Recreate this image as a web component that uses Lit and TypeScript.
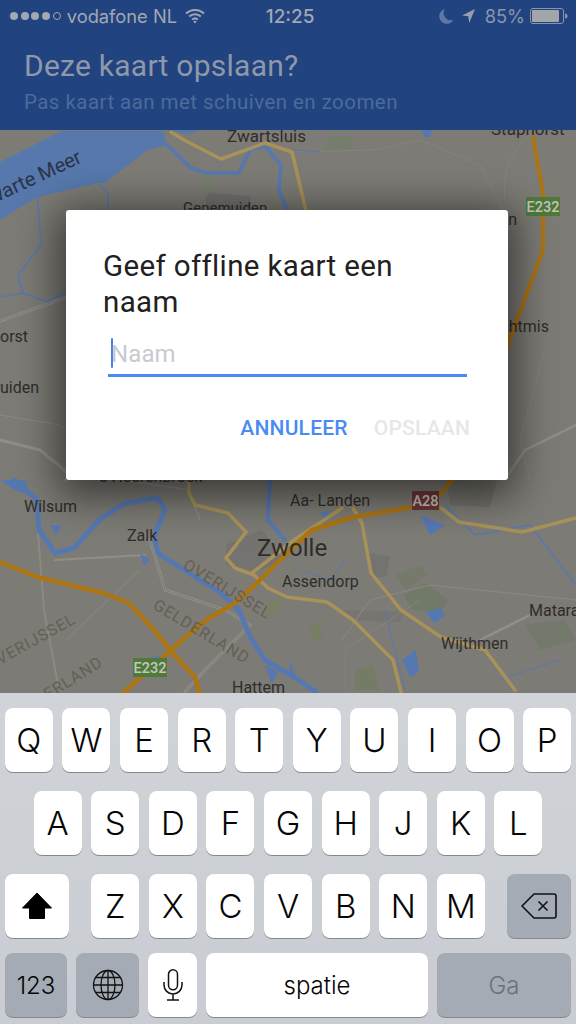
import { LitElement, html, css, svg } from "lit";
import { customElement } from "lit/decorators.js";

const ROW1 = "QWERTYUIOP".split("");
const ROW2 = "ASDFGHJKL".split("");
const ROW3 = "ZXCVBNM".split("");

const line = (d: string, c: string, w: number) =>
  svg`<path d=${d} fill="none" stroke=${c} stroke-width=${w} stroke-linejoin="round" stroke-linecap="round"/>`;

const label = (t: string, x: number, y: number, s = 17, a = "start") =>
  svg`<text x=${x} y=${y} font-size=${s} text-anchor=${a} fill="#2f2d2a" font-family="Roboto, sans-serif">${t}</text>`;

const region = (t: string, x: number, y: number, r: number) =>
  svg`<text transform="translate(${x} ${y}) rotate(${r})" font-size="16" letter-spacing="1" fill="#665f53" font-family="Roboto, sans-serif">${t}</text>`;

const shield = (t: string, x: number, y: number, w: number, h: number, c: string) => svg`
  <rect x=${x} y=${y} width=${w} height=${h} fill=${c}/>
  <text x=${x + w / 2} y=${y + h - 4.5} font-size="14.5" font-weight="500" text-anchor="middle" fill="#c4c6be" font-family="Roboto, sans-serif">${t}</text>`;

const YEL = "#a8925a";
const ORG = "#ad7412";
const BLU = "#5678b2";
const GRY = "#8b8982";
const DBL = "#908e87";

@customElement("app-map")
class AppMap extends LitElement {
  static styles = css`
    :host { display: block; position: relative; height: 563px; overflow: hidden; background: #7d7b75; }
    svg { position: absolute; inset: 0; display: block; }
  `;
  render() {
    return html`<svg width="576" height="563" viewBox="0 130 576 563" xmlns="http://www.w3.org/2000/svg">
      <path d="M0 130H576V693H0Z" fill="#7d7b75"/>
      <path d="M447 480H497L490 507L450 505Z" fill="#55534f" opacity=".25"/>
      <!-- urban grey -->
      <path d="M204 192L250 196L254 225L210 225Z" fill="#72716e"/>
      <path d="M226 545L262 530L284 560L250 575L226 565Z" fill="#74736f"/>
      <path d="M368 553L390 557L386 577L370 577Z" fill="#747370"/>
      <path d="M342 610L404 612L400 622L350 620Z" fill="#767572"/>
      <!-- greens -->
      <path d="M404 595L425 583L448 600L440 613L412 610Z" fill="#717a68"/>
      <path d="M268 605L280 597L278 613L266 616Z" fill="#78805f"/>
      <path d="M309 628L318 623L323 643L315 640Z" fill="#777f62"/>
      <path d="M395 575L420 565L428 575L405 590Z" fill="#757a6b"/>
      <path d="M525 625L565 620L576 640L540 650Z" fill="#737a6b"/>
      <path d="M355 670L372 665L380 690H355Z" fill="#757c66"/>
      <path d="M205 170L214 178L205 200Z" fill="#76806c"/>
      <path d="M328 138L350 135L352 148L325 152Z" fill="#757e6d"/>
      <!-- minor roads -->
      ${line("M0 321L67 297L90 287", DBL, 3)}
      ${line("M0 321L67 297L90 287", "#7d7b75", 1)}
      ${line("M0 415L60 425L90 450", GRY, 1)}
      ${line("M0 440L40 450L70 475L66 480", DBL, 3)}
      ${line("M120 480L190 490", GRY, 1.5)}
      ${line("M190 495L200 520", GRY, 1.5)}
      ${line("M37 520L44 610L58 685", GRY, 2)}
      ${line("M150 540L165 590L225 610L250 625L205 670L185 692", DBL, 3)}
      ${line("M150 540L165 590L225 610L250 625L205 670L185 692", "#7d7b75", 1)}
      ${line("M55 560L145 555", DBL, 2)}
      ${line("M342 640L370 600L430 585L576 600", GRY, 1)}
      ${line("M480 640L530 615", DBL, 2.5)}
      ${line("M290 152L375 150L420 140L480 165L505 215", "#85837c", 1)}
      ${line("M530 135Q500 160 505 200", "#85837c", 1)}
      ${line("M545 350L520 440L530 480", "#85837c", 1)}
      ${line("M508 475L525 450L576 425", DBL, 2.5)}
      ${line("M66 640L140 570", GRY, 1)}
      ${line("M345 690L345 650L420 600", "#85837c", 1)}
      <!-- water -->
      <path d="M0 162L62 131H163L167 145L147 150L105 183L99 183L37 197L0 220Z" fill="#5678ac"/>
      <path d="M168 130H200L186 134Z" fill="#5678ac"/>
      <path d="M422 130H432L430 137L424 137Z" fill="#5678ac"/>
      ${line("M37 193L41 245L18 275L23 293L47 302L66 292", BLU, 1.5)}
      ${line("M23 293L0 297", BLU, 1.5)}
      ${line("M100 185L108 193L108 210", BLU, 1.5)}
      ${line("M167 145L191 168L206 173L239 173L250 150L265 146L281 165L279 190L287 210", BLU, 3.5)}
      ${line("M290 150L320 152", BLU, 1)}
      ${line("M15 480L37 500L39 530L55 553L74 548L99 520L125 503L158 498L165 510L154 537L158 553L184 570L221 593L239 610L250 637L265 660L294 677L316 692", BLU, 5)}
      ${line("M270 480L268 520L285 540", BLU, 4)}
      <path d="M50 525L62 525L56 535Z M140 553L150 560L144 566Z M320 513L330 510L326 520Z M142 660L162 655L160 670L147 672Z M265 665L278 672L272 684Z M290 660L297 680L290 675Z M426 612L440 608L445 616L434 623Z M402 660L416 650L419 672L410 677Z" fill="#5678b2"/>
      ${line("M300 570L330 580L345 560", BLU, 1)}
      ${line("M385 610L405 690", BLU, 1)}
      ${line("M445 505L475 535L530 525L576 585", BLU, 1.5)}
      ${line("M500 680L560 660", BLU, 1)}
      <path d="M0 480L25 480L30 495L15 490Z" fill="#5678b2"/>
      <path d="M420 515L445 525L430 535Z" fill="#5678b2"/>
      <!-- yellow roads -->
      ${line("M171 132L184 140L221 159L265 143L292 152L307 215", YEL, 3.5)}
      ${line("M189 480V493L195 505L228 513L246 532L226 558L235 568L254 575L268 588L287 597L327 602L353 620L393 660L401 692", YEL, 3.5)}
      ${line("M252 573L294 540L342 508", YEL, 3.5)}
      ${line("M353 508L362 523L371 573L401 610L441 637L485 650L515 690", YEL, 3.5)}
      ${line("M441 508L459 522L522 532L576 518", YEL, 3.5)}
      <!-- motorways -->
      ${line("M533 137L543 193L543 250L513 330L505 355", ORG, 4)}
      ${line("M0 562L37 577L103 593L129 603L154 630L176 657L195 677L200 695", ORG, 4.5)}
      ${line("M121 695L173 648L206 620L235 603L257 583L283 557L312 530L349 518L412 507L441 493L452 480", ORG, 4.5)}
      <!-- labels -->
      ${label("Zwartsluis", 227, 142)}
      ${label("Staphorst", 491, 135, 17)}
      ${label("Genemuiden", 183, 213, 15)}
      ${label("Wilsum", 24, 512, 16)}
      ${label("Zalk", 127, 541, 16)}
      ${label("Aa- Landen", 290, 506, 16)}
      ${label("Zwolle", 257, 556, 24)}
      ${label("Assendorp", 282, 587, 16)}
      ${label("Matara", 529, 616, 16)}
      ${label("Wijthmen", 441, 649, 16)}
      ${label("Hattem", 232, 693, 16)}
      ${label("orst", 0, 342, 16)}
      ${label("uiden", 0, 393, 16)}
      ${label("Lichtmis", 549, 332, 16, "end")}
      ${label("Kamperveen", 517, 225, 16, "end")}
      ${label("'s Heerenbroek", 97, 482, 16)}
      <text transform="translate(83 162) rotate(-25)" text-anchor="end" font-size="20" fill="#2a3347" font-family="Roboto, sans-serif">Zwarte Meer</text>
      ${region("OVERIJSSEL", 182, 568, 31)}
      ${region("GELDERLAND", 152, 608, 31)}
      ${region("VERIJSSEL", 0, 665, -29)}
      ${region("ERLAND", 48, 700, -32)}
      ${shield("E232", 526, 197, 34, 19, "#4f7a3a")}
      ${shield("E232", 133, 658, 34, 19, "#4f7a3a")}
      ${shield("A28", 412, 491, 27, 19, "#703538")}
    </svg>`;
  }
}

@customElement("app-root")
class AppRoot extends LitElement {
  static styles = css`
    :host { display: block; position: relative; width: 576px; height: 1024px; overflow: hidden; font-family: Roboto, sans-serif; background: #cdd1d6; }

    .head { height: 130px; background: #21437f; box-sizing: border-box; display: flex; flex-direction: column; }
    .status { height: 32px; display: flex; align-items: center; padding: 0 8px 0 10px; font-family: Inter, sans-serif; font-size: 18.3px; color: #a2a8b2; }
    .dots { display: flex; gap: 2.7px; margin-right: 6px; }
    .dot { width: 8px; height: 8px; border-radius: 50%; background: #a2a8b2; box-sizing: border-box; }
    .dot.off { background: none; border: 1px solid #a2a8b2; }
    .carrier { width: 118px; white-space: nowrap; }
    .wifi { display: block; }
    .time { margin-left: 61px; font-weight: 500; width: 122px; font-size: 19px; }
    .right { margin-left: auto; display: flex; align-items: center; }
    .moon { margin-right: 8px; }
    .arrow { margin-right: 10px; }
    .pct { color: #8a95aa; margin-right: 5px; }
    .title { margin: 16px 0 0 24px; font-size: 30px; line-height: 36px; color: #8e98a9; letter-spacing: .25px; }
    .sub { margin: 4px 0 0 24px; font-size: 20.5px; line-height: 28px; color: #4c6b9c; letter-spacing: .45px; }

    .dialog { position: absolute; left: 66px; top: 210px; width: 442px; height: 270px; box-sizing: border-box; padding: 38px 38px 0 37px; background: #fff; border-radius: 3px; box-shadow: 0 8px 40px 8px rgba(0,0,0,.55); display: flex; flex-direction: column; }
    .dtitle { font-size: 29.5px; line-height: 36px; font-weight: 400; color: #212121; letter-spacing: .35px; margin: 0; }
    .field { margin: 4px 3px 0 4.5px; height: 43px; padding-top: 7px; border-bottom: 3px solid #4a8af4; display: flex; align-items: flex-start; }
    .caret { width: 2.5px; height: 30px; margin: 7px 0 0 3px; background: #4a7df0; border-radius: 1px; flex: none; }
    .ph { font-size: 24px; line-height: 36px; margin: 5px 0 0 -2px; color: #c8cad0; letter-spacing: .1px; }
    .actions { display: flex; justify-content: flex-end; gap: 26px; margin: 39px 0 0; font-size: 21px; line-height: 24px; font-weight: 500; letter-spacing: .2px; }
    .cancel { color: #4a8af4; }
    .save { color: #e6e7e9; }

    .kb { height: 331px; box-sizing: border-box; padding-top: 15px; background: linear-gradient(#d0d4d8, #c9cdd3); font-family: Inter, sans-serif; display: flex; flex-direction: column; }
    .row { display: flex; height: 64px; justify-content: center; gap: 9.6px; margin-bottom: 19px; }
    .row.r3 { justify-content: space-between; padding: 0 5px; margin-bottom: 15px; }
    .group { display: flex; gap: 9.6px; }
    .key { width: 48px; height: 64px; background: #fff; border-radius: 8px; box-shadow: 0 1px 0 #85888d; display: flex; align-items: center; justify-content: center; font-size: 33px; font-weight: 350; color: #050505; flex: none; }
    .dark { background: #a4abb5; }
    .wide { width: 64px; }
    .r4 { justify-content: flex-start; padding-left: 5px; gap: 9px; margin: 0; }
    .small { font-size: 24px; font-weight: 350; }
    .k123 { width: 62px; }
    .kglobe { width: 63px; }
    .kmic { width: 49px; }
    .kspace { width: 222px; }
    .kgo { width: 134px; color: #6d7176; }
  `;

  render() {
    return html`
      <div class="head">
        <div class="status">
          <div class="dots">
            <span class="dot"></span><span class="dot"></span><span class="dot"></span><span class="dot"></span><span class="dot off"></span>
          </div>
          <span class="carrier">vodafone NL</span>
          <svg class="wifi" width="20" height="16" viewBox="0 0 20 16">
            <path d="M1 5.5A13 13 0 0 1 19 5.5" fill="none" stroke="#a2a8b2" stroke-width="2"/>
            <path d="M4.2 8.6A8.5 8.5 0 0 1 15.8 8.6" fill="none" stroke="#a2a8b2" stroke-width="2"/>
            <path d="M7.2 11.6A4.2 4.2 0 0 1 12.8 11.6" fill="none" stroke="#a2a8b2" stroke-width="2"/>
            <path d="M8.3 13.4L10 15.4L11.7 13.4A2.6 2.6 0 0 0 8.3 13.4Z" fill="#a2a8b2"/>
          </svg>
          <span class="time">12:25</span>
          <div class="right">
            <svg class="moon" width="15" height="16" viewBox="0 0 15 16"><path d="M6 1A7.5 7.5 0 1 0 14.5 11.5A7 7 0 0 1 6 1Z" fill="#5d77a6"/></svg>
            <svg class="arrow" width="13" height="14" viewBox="0 0 13 14"><path d="M13 0L0 6.5L6.3 7.2L7.2 14Z" fill="#98a0ae"/></svg>
            <span class="pct">85%</span>
            <svg width="38" height="16" viewBox="0 0 38 16">
              <rect x=".5" y=".5" width="33" height="15" rx="2.5" fill="none" stroke="#8a95aa"/>
              <rect x="2" y="2" width="27" height="12" rx="1" fill="#a2a5aa"/>
              <path d="M35 5.5A2.5 2.5 0 0 1 35 10.5Z" fill="#8a95aa"/>
            </svg>
          </div>
        </div>
        <div class="title">Deze kaart opslaan?</div>
        <div class="sub">Pas kaart aan met schuiven en zoomen</div>
      </div>

      <app-map></app-map>

      <div class="kb">
        <div class="row">${ROW1.map((k) => html`<div class="key">${k}</div>`)}</div>
        <div class="row">${ROW2.map((k) => html`<div class="key">${k}</div>`)}</div>
        <div class="row r3">
          <div class="key wide">
            <svg width="30" height="26" viewBox="0 0 30 26"><path d="M15 0L29.5 15H22.5V25.5H7.5V15H.5Z" fill="#000" stroke="#000" stroke-linejoin="round"/></svg>
          </div>
          <div class="group">${ROW3.map((k) => html`<div class="key">${k}</div>`)}</div>
          <div class="key wide dark">
            <svg width="36" height="26" viewBox="0 0 36 26" fill="none" stroke="#111" stroke-width="1.6">
              <path d="M13 1H33A2 2 0 0 1 35 3V23A2 2 0 0 1 33 25H13L1 13Z" stroke-linejoin="round"/>
              <path d="M17.5 8.5L26.5 17.5M26.5 8.5L17.5 17.5"/>
            </svg>
          </div>
        </div>
        <div class="row r4">
          <div class="key dark small k123">123</div>
          <div class="key dark kglobe">
            <svg width="32" height="32" viewBox="0 0 32 32" fill="none" stroke="#111" stroke-width="1.3">
              <circle cx="16" cy="16" r="14.5"/>
              <ellipse cx="16" cy="16" rx="7" ry="14.5"/>
              <path d="M16 1.5V30.5M1.5 16H30.5M4 8.5H28M4 23.5H28"/>
            </svg>
          </div>
          <div class="key kmic">
            <svg width="20" height="32" viewBox="0 0 20 32" fill="none" stroke="#111" stroke-width="1.5">
              <rect x="5.5" y=".8" width="9" height="20" rx="4.5"/>
              <path d="M1 13V16A9 9 0 0 0 19 16V13M10 25V31M4 31H16"/>
            </svg>
          </div>
          <div class="key kspace small">spatie</div>
          <div class="key dark small kgo">Ga</div>
        </div>
      </div>

      <div class="dialog">
        <h2 class="dtitle">Geef offline kaart een<br />naam</h2>
        <div class="field"><span class="caret"></span><span class="ph">Naam</span></div>
        <div class="actions"><span class="cancel">ANNULEER</span><span class="save">OPSLAAN</span></div>
      </div>
    `;
  }
}
